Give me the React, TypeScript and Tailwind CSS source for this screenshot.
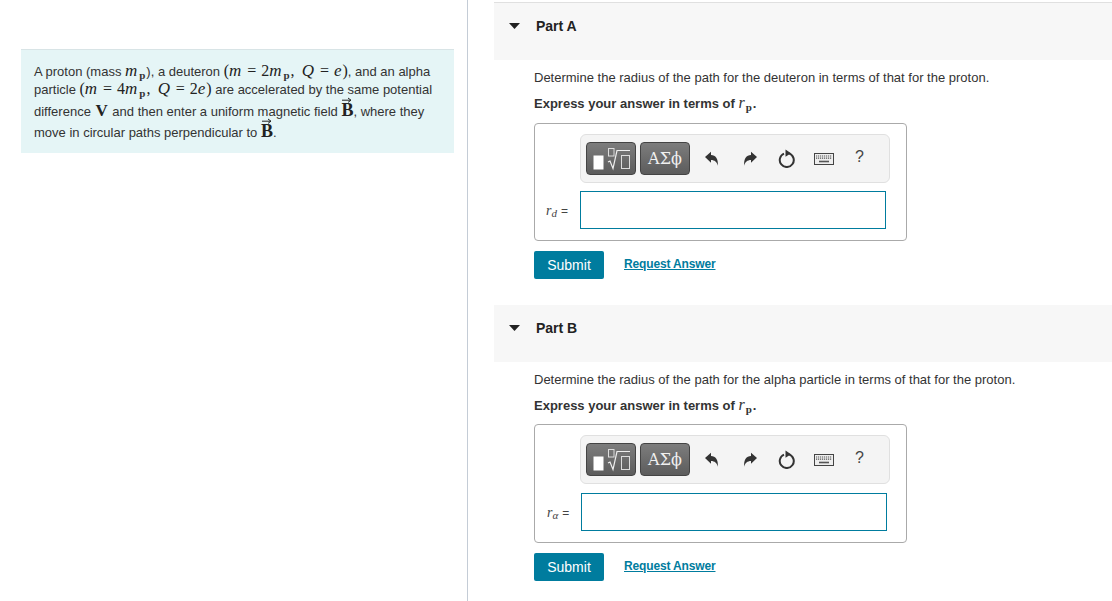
import React from "react";

const sans = { fontFamily: '"Liberation Sans", Arial, sans-serif' };

function M({ children }: { children: React.ReactNode }) {
  return <span className="font-['Liberation_Serif',serif] italic text-[17px] tracking-[0.9px] text-[#222]">{children}</span>;
}

function N({ children }: { children: React.ReactNode }) {
  return <span className="font-['Liberation_Serif',serif] text-[16px] text-[#222]">{children}</span>;
}

function Eq() {
  return <span className="font-['Liberation_Serif',serif] text-[16px] text-[#222] mx-[5px]">=</span>;
}

function Sub({ children }: { children: React.ReactNode }) {
  return <span className="font-['Liberation_Serif',serif] font-bold text-[11px] leading-none relative top-[3px] not-italic mx-px">{children}</span>;
}

function VecB() {
  return (
    <span className="relative inline-block font-['Liberation_Serif',serif] font-bold text-[18px] leading-none text-[#222]">
      B
      <svg className="absolute left-[1px] top-[-4px]" width="10" height="6" viewBox="0 0 10 6">
        <path d="M0 3.2H8.5M6 1l3 2.2L6 5.4" fill="none" stroke="#222" strokeWidth="1" />
      </svg>
    </span>
  );
}

function EquationIcon() {
  return (
    <svg width="38" height="24" viewBox="0 0 38 24" fill="none">
      <rect x="1.5" y="8.5" width="10" height="14" fill="#fff" />
      <rect x="16.5" y="1.5" width="5.5" height="7.5" stroke="#ddd" strokeWidth="1" />
      <path d="M16 15l2-1 3 7.5L25 3.5H38" stroke="#eee" strokeWidth="1.2" />
      <rect x="29.5" y="8.5" width="8" height="13" stroke="#ddd" strokeWidth="1" />
    </svg>
  );
}

function UndoIcon({ flip }: { flip?: boolean }) {
  return (
    <svg width="16" height="16" viewBox="0 0 16 16" className={flip ? "-scale-x-100" : ""}>
      <path d="M1 6 7 .8v3.3c4.6.3 7.4 3.4 6.8 10.6C13 11 10.6 8.9 7 8.9v2.8Z" fill="#333" />
    </svg>
  );
}

function ResetIcon() {
  return (
    <svg width="18" height="19" viewBox="0 0 18 19" fill="none">
      <path d="M6 4.6a7 7 0 1 0 5-.2" stroke="#333" strokeWidth="2" />
      <path d="M7.5 0.5 13 4.2l-5.5 3.5Z" fill="#333" />
    </svg>
  );
}

function KeyboardIcon() {
  return (
    <svg width="20" height="12" viewBox="0 0 20 12" fill="none">
      <rect x="0.5" y="0.5" width="19" height="11" fill="#eee" stroke="#444" />
      <path d="M2 3h16M2 5.2h16" stroke="#555" strokeWidth="1.2" strokeDasharray="1.2 .8" />
      <path d="M5 8.5h10" stroke="#555" strokeWidth="1.6" />
    </svg>
  );
}

function Toolbar() {
  return (
    <div className="ml-[45px] mr-[16px] h-[49px] flex items-center pl-[5px] bg-[#f4f4f4] border border-[#e0e0e0] rounded-[6px]">
      <div className="w-[50px] h-[33px] flex items-center justify-center rounded-[4px] border border-[#444] bg-gradient-to-b from-[#7d7d7d] to-[#5c5c5c]">
        <EquationIcon />
      </div>
      <div className="ml-[4px] w-[50px] h-[33px] flex items-center justify-center rounded-[4px] border border-[#444] bg-gradient-to-b from-[#7d7d7d] to-[#5c5c5c] font-['DejaVu_Serif',serif] text-[16px] text-[#f0f0f0]">
        ΑΣϕ
      </div>
      <div className="ml-[14px] w-[16px] flex justify-center"><UndoIcon /></div>
      <div className="ml-[22px] w-[16px] flex justify-center"><UndoIcon flip /></div>
      <div className="ml-[20px] w-[18px] flex justify-center"><ResetIcon /></div>
      <div className="ml-[18px] w-[20px] flex justify-center"><KeyboardIcon /></div>
      <div className="ml-[21px] text-[16px] text-[#444] -mt-[3px]">?</div>
    </div>
  );
}

function Part({
  name,
  text,
  variable,
  second,
}: {
  name: string;
  text: string;
  variable: string;
  second?: boolean;
}) {
  return (
    <section>
      <div className="h-[57px] bg-[#f7f7f7] flex items-start pt-[14px] pl-[15px]">
        <svg width="11" height="6" viewBox="0 0 11 6" className="mt-[6px]">
          <path d="M0 0h11L5.5 6Z" fill="#222" />
        </svg>
        <span className="ml-[16px] text-[14px] font-bold leading-[18px] text-[#222]">{name}</span>
      </div>
      <div className="pl-[40px]">
        <p className="mt-[9px] text-[13px] leading-[18px] text-[#333]">{text}</p>
        <p className="mt-[7px] h-[18px] text-[13px] leading-[18px] font-bold text-[#333]">
          Express your answer in terms of{" "}
          <span className="font-['Liberation_Serif',serif] italic font-normal text-[16px]">r</span>
          <Sub>p</Sub>.
        </p>
        <div className={`w-[373px] pt-[10px] border border-[#aaa] rounded-[4px] ${second ? "mt-[10px] h-[119px]" : "mt-[11px] h-[118px]"}`}>
          <Toolbar />
          <div className={`flex items-center ${second ? "mt-[9px] pl-px" : "mt-[8px]"}`}>
            <span className="w-[45px] pl-[11px] shrink-0 text-[12px] text-[#444] whitespace-nowrap">
              <span className="font-['Liberation_Serif',serif] italic text-[14px]">r</span>
              <span className="font-['Liberation_Serif',serif] italic text-[11px] relative top-[2px]">{variable}</span>
              <span className="ml-[4px]">=</span>
            </span>
            <div className="w-[306px] h-[38px] border border-[#007c9e] bg-white" />
          </div>
        </div>
        <div className="mt-[10px] flex items-center">
          <button className="w-[70px] h-[28px] bg-[#007c9e] rounded-[2px] text-[14px] text-white">Submit</button>
          <a className="ml-[20px] text-[12px] tracking-[-0.15px] font-bold text-[#007c9e] underline -mt-[2px]">Request Answer</a>
        </div>
      </div>
    </section>
  );
}

export default function App() {
  return (
    <div className="w-[1112px] h-[601px] overflow-hidden bg-white flex" style={sans}>
      <aside className="w-[468px] h-full shrink-0 border-r border-[#c4ccd6] pl-[21px] pt-[49px]">
        <div className="w-[433px] h-[104px] bg-[#e5f5f6] border-t border-[#d8e4e6] pl-[13px] pt-[11px] text-[13px] text-[#333] whitespace-nowrap">
          <p className="h-[18px] leading-[19px]">
            A proton (mass <M>m</M><Sub>p</Sub>), a deuteron <N>(</N><M>m</M><Eq /><N>2</N><M>m</M><Sub>p</Sub><N>,</N>&nbsp;&nbsp;<M>Q</M><Eq /><M>e</M><N>)</N>, and an alpha
          </p>
          <p className="h-[21px] leading-[19px]">
            particle <N>(</N><M>m</M><Eq /><N>4</N><M>m</M><Sub>p</Sub><N>,</N>&nbsp;&nbsp;<M>Q</M><Eq /><N>2</N><M>e</M><N>)</N> are accelerated by the same potential
          </p>
          <p className="h-[22px] leading-[22px]">
            difference <span className="font-['Liberation_Serif',serif] font-bold text-[17px] text-[#222] mx-px">V</span> and then enter a uniform magnetic field <VecB />, where they
          </p>
          <p className="leading-[22px]">
            move in circular paths perpendicular to <VecB />.
          </p>
        </div>
      </aside>
      <main className="flex-1 pl-[26px] pt-[2px]">
        <div className="h-px bg-[#e0e0e0]" />
        <Part
          name="Part A"
          text="Determine the radius of the path for the deuteron in terms of that for the proton."
          variable="d"
        />
        <div className="h-[26px]" />
        <Part
          name="Part B"
          text="Determine the radius of the path for the alpha particle in terms of that for the proton."
          variable="α"
          second
        />
      </main>
    </div>
  );
}
